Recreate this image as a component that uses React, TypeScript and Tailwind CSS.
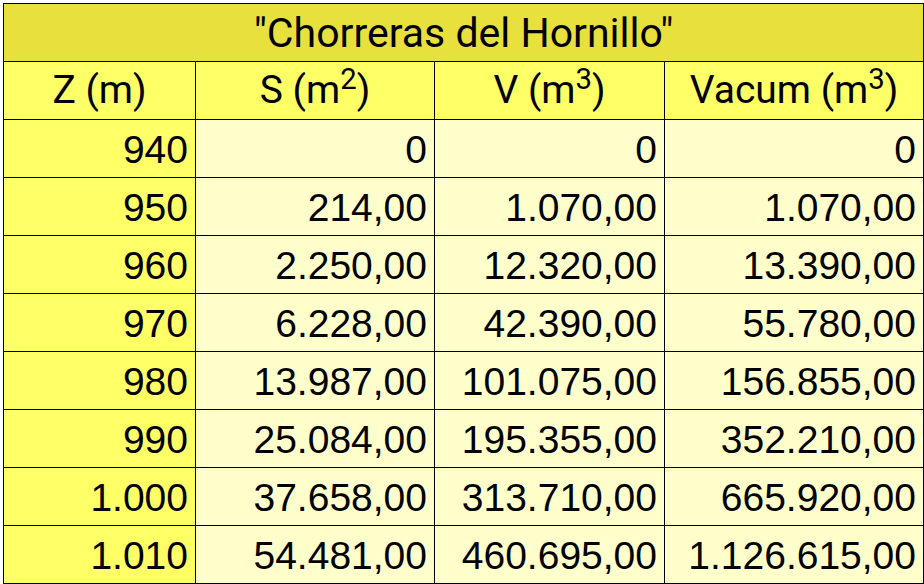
import React from 'react';

const rows: [string, string, string, string][] = [
  ['940', '0', '0', '0'],
  ['950', '214,00', '1.070,00', '1.070,00'],
  ['960', '2.250,00', '12.320,00', '13.390,00'],
  ['970', '6.228,00', '42.390,00', '55.780,00'],
  ['980', '13.987,00', '101.075,00', '156.855,00'],
  ['990', '25.084,00', '195.355,00', '352.210,00'],
  ['1.000', '37.658,00', '313.710,00', '665.920,00'],
  ['1.010', '54.481,00', '460.695,00', '1.126.615,00'],
];

const head = "flex items-center justify-center bg-[#ffff66] text-[39px] text-black font-['Roboto',sans-serif]";
const num = "flex items-center justify-end pr-[7px] pt-[3px] text-[39px] text-black font-['Liberation_Sans',Arial,sans-serif]";

export default function App() {
  return (
    <div className="w-[924px] h-[584px] bg-white p-[3px]">
      <div className="grid grid-cols-[191px_238px_229px_258px] auto-rows-[57px] gap-px bg-black border border-black w-[921px]">
        <div className="col-span-4 flex items-center justify-center pt-[2px] bg-[#e8e03c] text-[41px] text-black font-['Roboto',sans-serif]">
          "Chorreras del Hornillo"
        </div>
        <div className={head}>Z (m)</div>
        <div className={head}>
          <span>S (m<sup>2</sup>)</span>
        </div>
        <div className={head}>
          <span>V (m<sup>3</sup>)</span>
        </div>
        <div className={head}>
          <span>Vacum (m<sup>3</sup>)</span>
        </div>
        {rows.map((r) => (
          <React.Fragment key={r[0]}>
            <div className={`${num} bg-[#ffff66]`}>{r[0]}</div>
            <div className={`${num} bg-[#ffffcc]`}>{r[1]}</div>
            <div className={`${num} bg-[#ffffcc]`}>{r[2]}</div>
            <div className={`${num} bg-[#ffffcc]`}>{r[3]}</div>
          </React.Fragment>
        ))}
      </div>
    </div>
  );
}
